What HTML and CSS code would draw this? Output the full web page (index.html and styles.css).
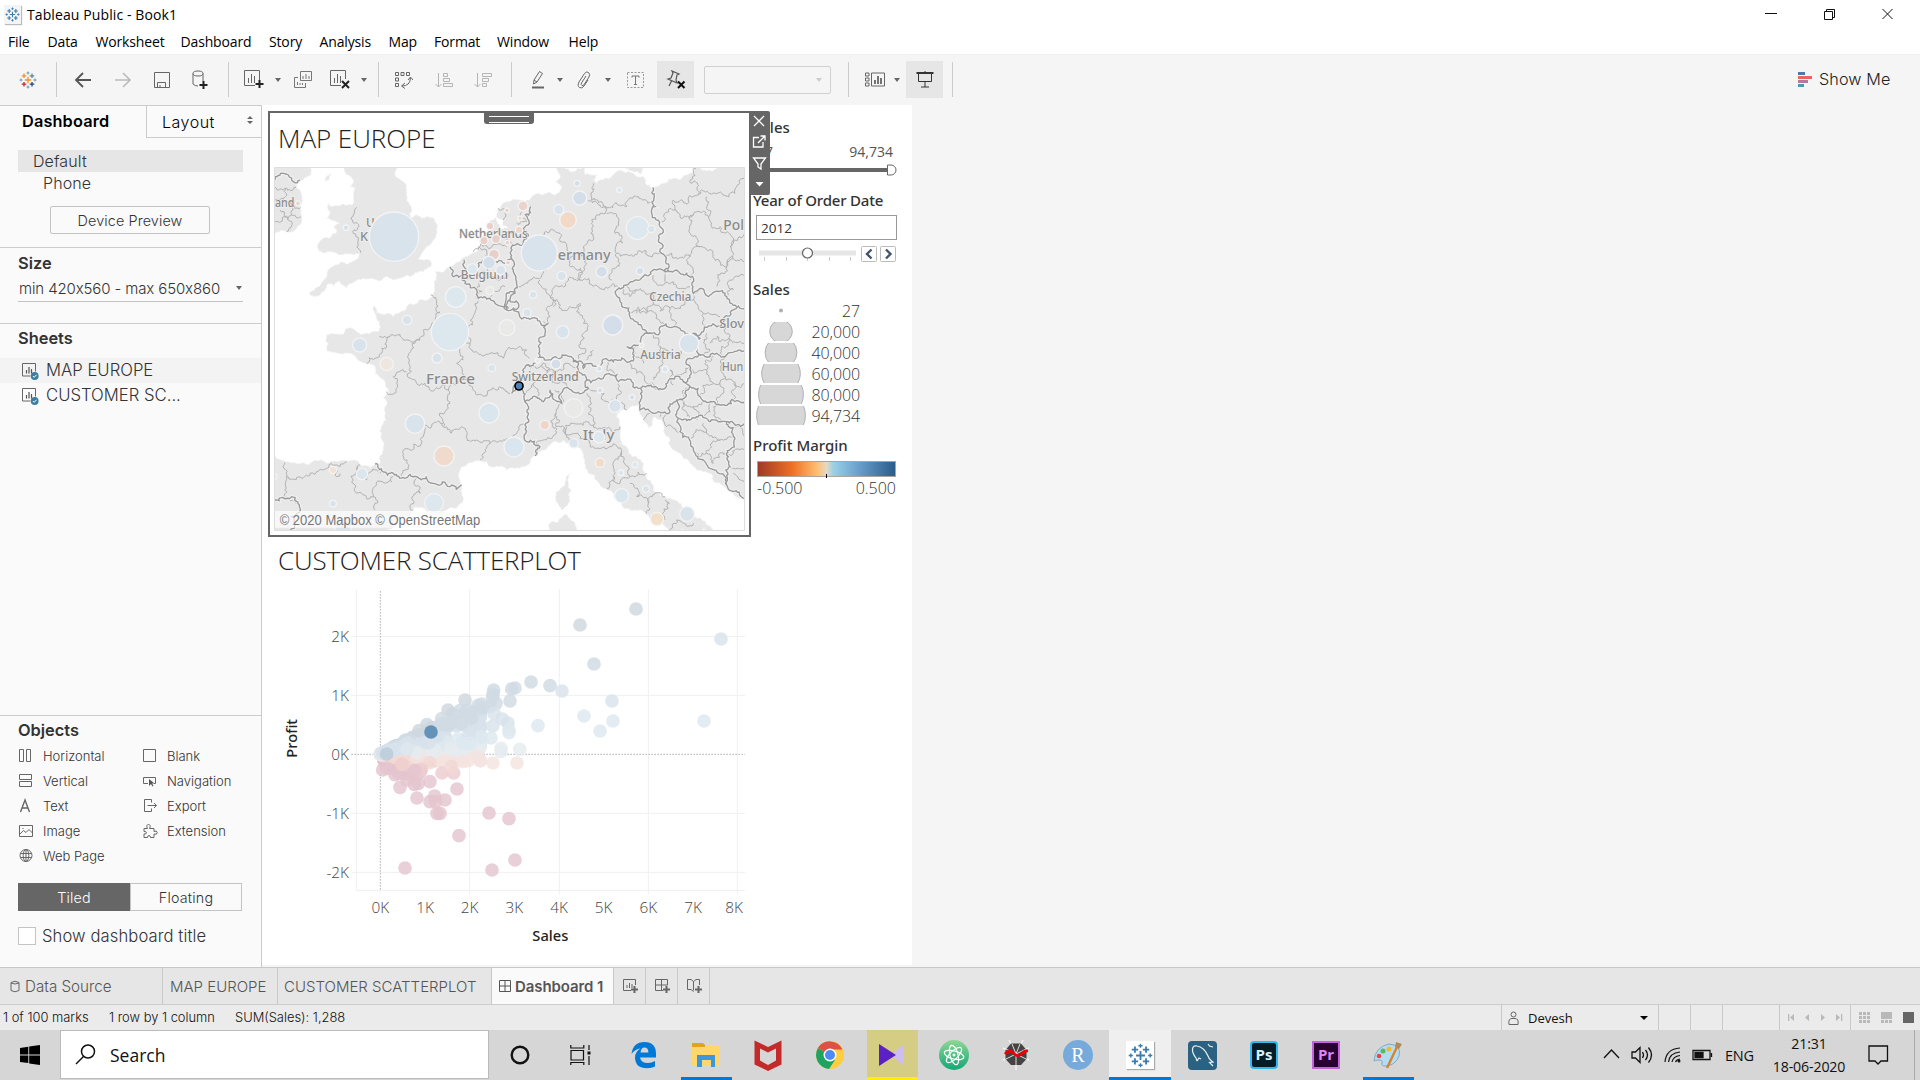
FILE: index.html
```html
<!DOCTYPE html>
<html lang="en">
<head>
<meta charset="utf-8">
<title>Tableau Public - Book1</title>
<link rel="stylesheet" href="styles.css">
</head>
<body>
<svg class="defs" width="0" height="0">
  <defs>
    <symbol id="tableau" viewBox="0 0 18 18">
      <g fill="none" stroke-width="1.3">
        <path stroke="var(--a,#3b7cab)" d="M9 5.8v6.4M5.8 9h6.4"/>
        <path stroke="var(--b,#3b7cab)" d="M5 2.5v4.6M2.7 4.8h4.6"/>
        <path stroke="var(--c,#3b7cab)" d="M13 2.5v4.6M10.7 4.8h4.6"/>
        <path stroke="var(--d,#3b7cab)" d="M5 10.9v4.6M2.7 13.2h4.6"/>
        <path stroke="var(--e,#3b7cab)" d="M13 10.9v4.6M10.7 13.2h4.6"/>
        <path stroke="var(--f,#3b7cab)" stroke-width="1" d="M9 .5v3M7.5 2h3M9 14.5v3M7.5 16h3M.5 9h3M2 7.5v3M14.500 9h3M16 7.500v3"/>
      </g>
    </symbol>
    <symbol id="sheet" viewBox="0 0 18 18">
      <path d="M14.500 9.500V1.500H1.500v12.500H9.500" fill="none" stroke="#666"/>
      <path d="M5.500 11.500V8M8 11.500V5M10.500 11.500V7" stroke="#555" stroke-width="1.200"/>
      <circle cx="13.700" cy="14" r="3.900" fill="#3b7ea1"/>
      <path d="M11.900 14l1.300 1.300 2.300-2.500" fill="none" stroke="#fff"/>
    </symbol>
  </defs>
</svg>

<header class="titlebar">
  <span class="app-icon"><svg width="15" height="15"><use href="#tableau"/></svg></span>
  <span class="title">Tableau Public - Book1</span>
  <svg class="winctl" width="116" height="16" viewBox="0 0 116 16" fill="none" stroke="#111">
    <path d="M-6 7.500h12M53.500 5.500h8v8h-8zM55.500 5.500v-2h8v8h-2M111.500 3l10 10M121.500 3l-10 10"/>
  </svg>
</header>

<nav class="menubar">
  <span>File</span><span>Data</span><span>Worksheet</span><span>Dashboard</span><span>Story</span><span>Analysis</span><span>Map</span><span>Format</span><span>Window</span><span>Help</span>
</nav>

<div class="toolbar">
  <span class="t t-logo"><svg width="18" height="18"><use href="#tableau"/></svg></span>
  <i class="sep after-logo"></i>
  <span class="t w40"><svg width="18" height="16" viewBox="0 0 18 16" fill="none" stroke="#555" stroke-width="1.800"><path d="M17 8H2M9 1L2 8l7 7"/></svg></span>
  <span class="t w39"><svg width="18" height="16" viewBox="0 0 18 16" fill="none" stroke="#bbb" stroke-width="1.600"><path d="M1 8h15M9 1l7 7-7 7"/></svg></span>
  <span class="t w39"><svg width="16" height="16" viewBox="0 0 16 16" fill="none" stroke="#666"><path d="M.5.5h15v15H.5zM3.500 15.500v-5h8v5M6 13v2"/></svg></span>
  <span class="t w38"><svg width="16" height="20" viewBox="0 0 16 20" fill="none" stroke="#666"><ellipse cx="6" cy="3.500" rx="5" ry="2.500"/><path d="M1 3.500V14q2 2 5 2M11 3.500V11"/><path d="M11.500 11v8M7.500 15h8" stroke="#222" stroke-width="2"/></svg></span>
  <i class="sep after-data"></i>
  <span class="t w29"><svg width="20" height="19" viewBox="0 0 20 19" fill="none" stroke="#666"><path d="M15.500 10V.5H.5v15H11M4.500 13V8M7.500 13V4M10.500 13V6"/><path d="M15.500 10v8M11.500 14h8" stroke="#222" stroke-width="2"/></svg></span>
  <span class="t w19"><i class="caret"></i></span>
  <span class="t w32"><svg width="18" height="17" viewBox="0 0 18 17" fill="none" stroke="#777"><path d="M6.500.5h11v9h-11zM4 6.500H.5v10h11V12M9 8V5M12 8V3M15 8V5M3.500 14v-3M6 14v-2M8.500 14v-2"/></svg></span>
  <span class="t w43"><svg width="20" height="19" viewBox="0 0 20 19" fill="none" stroke="#666"><path d="M15.500 9V.5H.5v15H11M4.500 13V8M7.500 13V4M10.500 13V6"/><path d="M12 11l7 7M19 11l-7 7" stroke="#222" stroke-width="2"/></svg></span>
  <span class="t w5"><i class="caret"></i></span>
  <i class="sep after-clear"></i>
  <span class="t w40"><svg width="18" height="18" viewBox="0 0 18 18" fill="none" stroke="#666"><path d="M.5 1.500h3v3h-3zM6 1.500h3v3H6zM11.500 1.500h3v3h-3zM.5 7h3v3h-3zM.5 12.500h3v3h-3zM7 15q8 0 8.500-8M10 12l-3.500 3 3.500 2.500M13 9l2.500-3L18 9"/></svg></span>
  <span class="t w40"><svg width="18" height="16" viewBox="0 0 18 16" fill="none" stroke="#b5b5b5"><path d="M3.500 1v14M.5 12l3 3 3-3M8.500 1.500h4v3h-4zM8.500 6.500h6v3h-6zM8.500 11.500h9v3h-9z"/></svg></span>
  <span class="t w38"><svg width="18" height="16" viewBox="0 0 18 16" fill="none" stroke="#b5b5b5"><path d="M3.500 1v14M.5 12l3 3 3-3M8.500 1.500h9v3h-9zM8.500 6.500h6v3h-6zM8.500 11.500h4v3h-4z"/></svg></span>
  <i class="sep after-sort"></i>
  <span class="t w28"><svg width="14" height="19" viewBox="0 0 14 19" fill="none" stroke="#666"><path d="M3 10L8.500 1.500l3 2L6 12l-3.500 2zM3 10l3 2"/><path d="M1 17.500h12" stroke-width="2"/></svg></span>
  <span class="t w15"><i class="caret"></i></span>
  <span class="t w34"><svg width="14" height="18" viewBox="0 0 14 18" fill="none" stroke="#666"><path d="M9 5L4.500 12q-1 2 .5 2.500t2.500-1.500L12 6q1.500-3-.5-4.500T7.500 2.500L2 11q-2 4 .5 5.500T7 15l4-6"/></svg></span>
  <span class="t w14"><i class="caret"></i></span>
  <span class="t w41"><svg width="17" height="16" viewBox="0 0 17 16" fill="none"><path d="M.5.5h16v15H.5z" stroke="#999" stroke-dasharray="2 1.500"/><path d="M5 5.500V4h7v1.500M8.500 4v8.500M7 12.500h3" stroke="#777"/></svg></span>
  <span class="t box"><svg width="20" height="20" viewBox="0 0 20 20" fill="none" stroke="#555" stroke-width="1.200"><path d="M6 1l7 3-2 1-1 5 1 3-9-4 3-1 2-5zM5.500 11L3 16"/><path d="M12 11.500l6.500 6.500M18.500 11.500L12 18" stroke="#111" stroke-width="2"/></svg></span>
  <span class="combo"><i class="caret pale"></i></span>
  <i class="sep after-combo"></i>
  <span class="t w38"><svg width="20" height="15" viewBox="0 0 20 15" fill="none" stroke="#666"><path d="M.5 1h3.500v3H.5zM.5 6h3.500v3H.5zM.5 11h3.500v3H.5zM6.500 1h13v13h-13z"/><path d="M10 12V8M13 12V4M16 12V6" stroke-width="1.800"/></svg></span>
  <span class="t w5"><i class="caret"></i></span>
  <span class="t box present"><svg width="18" height="17" viewBox="0 0 18 17" fill="none" stroke="#333"><path d="M.5 2h17" stroke-width="2"/><path d="M9 0v1M2.500 3v7.500h13V3M9 10.500V16M5 16h8"/></svg></span>
  <i class="sep after-present"></i>
  <span class="showme"><svg width="14" height="15" viewBox="0 0 14 15"><path d="M0 0h7v3H0z" fill="#4e79a7"/><path d="M0 4h14v3H0z" fill="#e8665d"/><path d="M0 8h10v3H0z" fill="#b07aa1"/><path d="M0 12h6v3H0z" fill="#4e9ab0"/></svg>Show Me</span>
</div>

<main class="work">
  <aside class="panel">
    <div class="ptabs"><b>Dashboard</b><span>Layout<svg width="6" height="8" viewBox="0 0 6 8" fill="#666"><path d="M3 0l3 3H0zM3 8l3-3H0z"/></svg></span></div>
    <div class="devices">
      <div class="dev on">Default</div>
      <div class="dev sub">Phone</div>
      <div class="preview">Device Preview</div>
    </div>
    <section class="size">
      <h2>Size</h2>
      <div class="select"><span>min 420x560 - max 650x860</span><i class="caret"></i></div>
    </section>
    <section class="sheets">
      <h2>Sheets</h2>
      <div class="row on"><svg width="18" height="18"><use href="#sheet"/></svg><span>MAP EUROPE</span></div>
      <div class="row"><svg width="18" height="18"><use href="#sheet"/></svg><span>CUSTOMER SC...</span></div>
    </section>
    <section class="objects">
      <h2>Objects</h2>
      <div class="ogrid">
        <span><svg width="16" height="16" viewBox="0 0 16 16"><path d="M1.500 1.500h4v12h-4zM8.500 1.500h4v12h-4z"/></svg>Horizontal</span>
        <span><svg width="16" height="16" viewBox="0 0 16 16"><path d="M1.500 1.500h12v12h-12z"/></svg>Blank</span>
        <span><svg width="16" height="16" viewBox="0 0 16 16"><path d="M1.500 1.500h12v5h-12zM1.500 8.500h12v5h-12z"/></svg>Vertical</span>
        <span><svg width="16" height="16" viewBox="0 0 16 16"><path d="M6 10.500H1.500v-6h12v6H12"/><path d="M7 6v7l2-2 1.500 2.500 1-.7L10 10.500h2.500z" fill="#555" stroke="none"/></svg>Navigation</span>
        <span><svg width="16" height="16" viewBox="0 0 16 16"><path d="M2.500 14L7 2l4.500 12M4 10h6" stroke-width="1.400"/></svg>Text</span>
        <span><svg width="16" height="16" viewBox="0 0 16 16"><path d="M9.500 4.500v-3h-7v12h7v-3M5.500 7.500h9M12 5l2.500 2.500L12 10"/></svg>Export</span>
        <span><svg width="16" height="16" viewBox="0 0 16 16"><path d="M1.500 2.500h13v11h-13zM2 11l3.500-3.500 2.500 2 3-3 3.500 3.500M4.500 5.500h1"/></svg>Image</span>
        <span><svg width="16" height="16" viewBox="0 0 16 16"><path d="M2 5.500h3.500C4 3 5 1.500 6.500 1.500S9 3 7.500 5.500H12v3q3-1.500 3.200 1T12 11v3.500H8.500q0-2-1.500-2t-1.500 2H2V11q2.500.3 2.500-1.200T2 8.500z"/></svg>Extension</span>
        <span><svg width="16" height="16" viewBox="0 0 16 16"><circle cx="8" cy="7.500" r="6"/><ellipse cx="8" cy="7.500" rx="2.800" ry="6"/><path d="M2.500 5.500h11M2.500 9.500h11M8 1.500v12"/></svg>Web Page</span>
      </div>
      <div class="toggle"><span class="on">Tiled</span><span>Floating</span></div>
      <div class="check"><i></i>Show dashboard title</div>
    </section>
  </aside>

  <div class="stage">
    <div class="dash">
      <div class="views">
        <section class="view selected">
          <h1>MAP EUROPE</h1>
          <svg id="map" width="471" height="364" viewBox="42 201 1413 1092"></svg>
          <i class="handle"></i>
          <svg class="tools" width="21" height="84" viewBox="0 0 21 84" fill="none" stroke="#fff" stroke-width="1.300">
            <path d="M5 5l10 10M15 5L5 15M10 26.500H4.500V36H14v-5M9 32l7-7M11.500 25H16v4.500M4.500 47h12L12 53v5l-3-2v-3z"/>
            <path d="M6.500 71h8l-4 4.500z" fill="#fff" stroke="none"/>
          </svg>
        </section>
        <section class="view scatter">
          <h1>CUSTOMER SCATTERPLOT</h1>
          <svg id="scatter" width="480" height="375" viewBox="0 120 1440 1125"></svg>
        </section>
      </div>
      <div class="legends">
        <h3>Sales</h3>
        <div class="range"><span>27</span><span>94,734</span></div>
        <svg class="rslider" width="145" height="12" viewBox="0 0 145 12"><path d="M0 6h134" stroke="#666" stroke-width="4"/><path d="M134.500 1h3.500a5 5 0 0 1 0 10h-3.500z" fill="#fff" stroke="#666"/></svg>
        <h3 class="year-h">Year of Order Date</h3>
        <div class="year">2012</div>
        <svg class="yslider" width="140" height="18" viewBox="0 0 140 18" fill="none">
          <path d="M2 8h97" stroke="#e6e6e6" stroke-width="5"/>
          <path d="M7.500 12v4M29.500 12v4M50.500 12v4M72.500 12v4M93.500 12v4" stroke="#ccc"/>
          <circle cx="50.500" cy="8" r="5" fill="#fff" stroke="#666" stroke-width="1.200"/>
          <rect x="104.500" y="1.500" width="15" height="15" rx="1" fill="#fff" stroke="#bbb"/>
          <rect x="123.500" y="1.500" width="15" height="15" rx="1" fill="#fff" stroke="#bbb"/>
          <path d="M114.500 4.500L110 9l4.500 4.500M129 4.500l4.500 4.500-4.500 4.500" stroke="#44546a" stroke-width="2.400"/>
        </svg>
        <h3 class="size-h">Sales</h3>
        <div class="sizes">
          <span><svg width="52" height="19" viewBox="-26 -9.500 52 19"><circle class="dot" r="2"/></svg>27</span>
          <span><svg width="52" height="19" viewBox="-26 -9.500 52 19"><circle r="11.300"/></svg>20,000</span>
          <span><svg width="52" height="19" viewBox="-26 -9.500 52 19"><circle r="15.900"/></svg>40,000</span>
          <span><svg width="52" height="19" viewBox="-26 -9.500 52 19"><circle r="19.300"/></svg>60,000</span>
          <span><svg width="52" height="19" viewBox="-26 -9.500 52 19"><circle r="22.400"/></svg>80,000</span>
          <span><svg width="52" height="19" viewBox="-26 -9.500 52 19"><circle r="24.400"/></svg>94,734</span>
        </div>
        <h3 class="margin-h">Profit Margin</h3>
        <div class="ramp"><i></i></div>
        <div class="ramp-labels"><span>-0.500</span><span>0.500</span></div>
      </div>
    </div>
  </div>
</main>

<div class="sheetbar">
  <span class="tab src"><svg width="10" height="13" viewBox="0 0 10 13" fill="none" stroke="#666"><path d="M1 2.500q4-2.500 8 0v8q-4 2.500-8 0zM1 3q4 2 8 0"/></svg>Data Source</span>
  <span class="tab map">MAP EUROPE</span>
  <span class="tab cust">CUSTOMER SCATTERPLOT</span>
  <span class="tab cur"><svg width="12" height="12" viewBox="0 0 12 12" fill="none" stroke="#555"><path d="M.5.500h11v11H.5zM6 .5v11M.5 6h11"/></svg>Dashboard 1</span>
  <span class="tab new"><svg width="16" height="16" viewBox="0 0 16 16" fill="none" stroke="#666"><path d="M12.500 7V1.500H.5v11H8M4 10V7M6.500 10V5M9 10V6"/><path d="M11.500 8v7M8 11.500h7" stroke-width="2"/></svg></span>
  <span class="tab new"><svg width="16" height="16" viewBox="0 0 16 16" fill="none" stroke="#666"><path d="M12.500 7V1.500H.5v11H8M6.500 1.500v11M.5 7h12"/><path d="M11.500 8v7M8 11.500h7" stroke-width="2"/></svg></span>
  <span class="tab new"><svg width="16" height="16" viewBox="0 0 16 16" fill="none" stroke="#666"><path d="M12.500 7V1.500H9L6.500 3.500 4 1.500H.5v10H4l2.500 2M6.500 3.500v9"/><path d="M11.500 8v7M8 11.500h7" stroke-width="2"/></svg></span>
</div>

<div class="status">
  <span class="s1">1 of 100 marks</span><span class="s2">1 row by 1 column</span><span class="s3">SUM(Sales): 1,288</span>
  <span class="cell user"><svg width="11" height="14" viewBox="0 0 11 14" fill="none" stroke="#666"><circle cx="5.500" cy="3.500" r="2.500"/><path d="M1 13.500q-1-6 3-6h3q4 0 3 6z"/></svg>Devesh<i class="caret black"></i></span>
  <span class="cell w32b"></span><span class="cell w32b"></span><span class="cell w57"></span>
  <span class="cell nav"><svg width="55" height="9" viewBox="0 0 55 9" fill="#b9b9b9"><path d="M0 1h1.300v7H0zM6 1v7L2 4.500zM21 1v7l-4-3.500zM33 1v7l4-3.500zM48 1v7l4-3.500zM53 1h1.300v7H53z"/></svg></span>
  <span class="cell grids"><svg width="56" height="11" viewBox="0 0 56 11" fill="#b9b9b9"><path d="M0 0h3v3H0zM4 0h3v3H4zM8 0h3v3H8zM0 4h3v3H0zM4 4h3v3H4zM8 4h3v3H8zM0 8h3v3H0zM4 8h3v3H4zM8 8h3v3H8zM22 0h11v7H22zM22 8h3v3h-3zM26 8h3v3h-3zM30 8h3v3h-3z"/><path d="M44 0h11v11H44z" fill="#666"/></svg></span>
</div>

<footer class="taskbar">
  <span class="start"><svg width="20" height="20" viewBox="0 0 20 20"><path d="M0 3l8.300-1.200v7.700H0zM9.200 1.600L20 0v9.500H9.200zM0 10.400h8.300V18L0 16.900zM9.200 10.400H20V20L9.200 18.400z"/></svg></span>
  <div class="search"><svg width="21" height="21" viewBox="0 0 21 21" fill="none" stroke="#111" stroke-width="1.500"><circle cx="13" cy="7.500" r="6.500"/><path d="M8.500 12.500L1 20"/></svg>Search</div>
  <span class="app"><svg width="20" height="20" viewBox="0 0 20 20" fill="none" stroke="#111" stroke-width="2.400"><circle cx="10" cy="10" r="8.300"/></svg></span>
  <span class="app tv"><svg width="22" height="20" viewBox="0 0 22 20" fill="none" stroke="#111" stroke-width="1.200"><path d="M1 5.500h12.500v9.500H1zM.8 0v3h13V0M.8 20v-2.500h13V20M19 0v5M19 11v9"/><path d="M17.500 6.500h3v3h-3z" fill="#111" stroke="none"/></svg></span>
  <span class="app"><svg width="26" height="28" viewBox="0 0 26 28"><path d="M.5 13Q2 1 13.500 1 25 1 25 13v3.500H9q1 5.500 8 5.500 3.500 0 7-2v5.500q-3 1.700-8 1.700-11.500 0-12-10.500 0-6 5.500-9.200-5.500.5-9 5.500zm9-1.500h8q-.3-5-4-5-3.500 0-4 5z" fill="#0078d7"/></svg></span>
  <span class="app run"><svg width="29" height="25" viewBox="0 0 29 25"><path d="M0 0h11l2 2v4H0z" fill="#e3a21a"/><path d="M0 4h13l3-2h12v21H0z" fill="#ffd76a"/><path d="M5 24V12h18v12h-4v-7h-9v7z" fill="#3e97d9"/></svg></span>
  <span class="app"><svg width="28" height="31" viewBox="0 0 28 31"><path d="M.5.500L14 7 27.500.500v24L14 31 .5 24.500z" fill="#c32a2a"/><path d="M6 8.500l8 4 8-4v12l-8 4.500-8-4.500z" fill="#d6d6d6"/></svg></span>
  <span class="app"><svg width="28" height="28" viewBox="0 0 28 28"><circle cx="14" cy="14" r="14" fill="#ffcd40"/><path d="M14 14L1.900 7A14 14 0 0 0 13 28l6-9z" fill="#1da462"/><path d="M14 14L1.900 7a14 14 0 0 1 24.600 1.500H14z" fill="#dd5144"/><circle cx="14" cy="14" r="6.500" fill="#fff"/><circle cx="14" cy="14" r="5" fill="#4c8bf5"/></svg></span>
  <span class="app alert"><svg width="28" height="24" viewBox="0 0 28 24"><path d="M26 1v22L13 12z" fill="#cdbdf0"/><path d="M1 1l17 11L1 23z" fill="#5b21c4"/></svg></span>
  <span class="app"><svg width="30" height="30" viewBox="0 0 30 30"><defs><linearGradient id="ga" x2="0" y2="1"><stop stop-color="#8fd694"/><stop offset="1" stop-color="#12a876"/></linearGradient></defs><circle cx="15" cy="15" r="15" fill="url(#ga)"/><g fill="none" stroke="#fff" stroke-width="1.200"><ellipse cx="15" cy="15" rx="10" ry="4" transform="rotate(15 15 15)"/><ellipse cx="15" cy="15" rx="10" ry="4" transform="rotate(75 15 15)"/><ellipse cx="15" cy="15" rx="10" ry="4" transform="rotate(135 15 15)"/></g><circle cx="15" cy="15" r="1.500" fill="#fff"/></svg></span>
  <span class="app"><svg width="28" height="30" viewBox="0 0 28 30"><g stroke="#f2f2f2" stroke-width="1.500"><path d="M14 14V30M14 14L27 8M14 14L1 8M14 14l13 6M14 14L1 20M14 14l7-14M14 14L7 0"/></g><path d="M9 3.500h10l5.500 6.500v9L19 25H9l-5.500-6v-9z" fill="#444"/><path d="M14 14L10 4M14 14l4-10M14 14v11M14 14l10 5M14 14l-10 5M14 14L4 9M14 14l10-5" stroke="#ddd"/><path d="M3 14q4-5 8-1.500 4 5 8 2 3-4 7-3.500" fill="none" stroke="#e00" stroke-width="2.800"/></svg></span>
  <span class="app"><span class="rlogo">R</span></span>
  <span class="app active"><span class="tlogo"><svg width="25" height="25"><use href="#tableau"/></svg></span></span>
  <span class="app"><svg width="29" height="29" viewBox="0 0 29 29"><rect width="29" height="29" rx="4" fill="#2b6282"/><path d="M9 20l-1-3q-4-5-3.500-9Q5 4 9 5q7 1 11 10 1 3 3 4.500l2 1.500-3.500.5L25 25M9 20l2-3 2 1M20 3l1.500 2L25 6" fill="none" stroke="#e8f0f5" stroke-width="1.200"/></svg></span>
  <span class="app"><span class="adobe ps">Ps</span></span>
  <span class="app"><span class="adobe pr">Pr</span></span>
  <span class="app run"><svg width="30" height="28" viewBox="0 0 30 28"><path d="M1 20Q2 6 16 3q13 1 10 12-4 10-14 10-4 0-3-3t-3-3-5 1z" fill="#b5dcf0" stroke="#7eaac4"/><circle cx="6" cy="15" r="2.300" fill="#e44"/><circle cx="10" cy="10" r="2.500" fill="#5cb85c"/><circle cx="16" cy="8" r="2.500" fill="#f5b82e"/><path d="M14 27L24 6" stroke="#d9822b" stroke-width="2.400"/><path d="M22 6l1-5 6 2-3 5z" fill="#b08a5a"/></svg></span>
  <svg class="tray" width="110" height="22" viewBox="0 0 110 22" fill="none" stroke="#111" stroke-width="1.300">
    <path d="M1 14l7.500-8L16 14M29 8h3.500L37 3.500v15L32.500 14H29zM39.500 8q2 3 0 6M42.500 6q4 5 0 10M45.500 3.500q6 7.500 0 15"/>
    <path d="M62 18q1-13 15-14M65.500 18q1-9 11.500-10M69 18q1-5.500 8-6.500M72.500 18q1-2.500 4.500-3" stroke-width="1.200"/><circle cx="76" cy="17" r="1.500" fill="#111" stroke="none"/>
    <path d="M90 6.500h17v9H90zM108.500 9v4"/><path d="M92 8.500h8v5h-8z" fill="#111"/>
  </svg>
  <span class="eng">ENG</span>
  <span class="clock"><span>21:31</span><span>18-06-2020</span></span>
  <svg class="note" width="21" height="21" viewBox="0 0 21 21" fill="none" stroke="#111" stroke-width="1.300"><path d="M1 1h18.500v15H13l-3 3-3-3H1z"/></svg>
  <i class="peek"></i>
</footer>
<script src="charts.js"></script>
</body>
</html>
```
FILE: styles.css
```css
* { box-sizing: border-box; }
body { margin: 0; width: 1920px; height: 1080px; overflow: hidden; background: #fff; color: #333; font-family: Inter, "Open Sans", sans-serif; font-weight: 300; display: flex; flex-direction: column; }
h1, h2, h3 { margin: 0; font-weight: 300; }
svg { display: block; flex: none; }
.defs { position: absolute; }
span { white-space: nowrap; }

.titlebar { height: 28px; display: flex; align-items: center; padding: 0 26px 0 4px; color: #000; font: 400 14px "Open Sans", sans-serif; }
.app-icon { width: 17px; height: 19px; display: flex; align-items: center; justify-content: center; background: #f4f4f4; box-shadow: 1px 1px 1px #bbb; }
.title { flex: 1; padding-left: 6px; letter-spacing: .1px; }
.winctl { overflow: visible; margin-right: 7px; }
.menubar { height: 26px; padding: 1px 0 0 8px; display: grid; grid-template-columns: 39.500px 48px 85px 88.500px 50.500px 69px 45.500px 63px 71.500px 60px; align-items: center; color: #000; font: 400 14px "Open Sans", sans-serif; letter-spacing: -.15px; }

.toolbar { height: 51px; background: #f5f5f5; border-top: 1px solid #efefef; display: flex; align-items: center; padding-bottom: 1px; }
.t { display: flex; align-items: center; justify-content: center; height: 37px; }
.t-logo { width: 56px; --a: #eb912c; --b: #eb912c; --c: #5b879b; --d: #c72035; --e: #1f457e; --f: #7099a6; }
.w5 { width: 5px; } .w14 { width: 14px; } .w15 { width: 15px; } .w19 { width: 19px; } .w28 { width: 28px; } .w29 { width: 29px; } .w32 { width: 32px; } .w34 { width: 34px; } .w38 { width: 38px; } .w39 { width: 39px; } .w40 { width: 40px; } .w41 { width: 41px; } .w43 { width: 42px; }
.sep { width: 1px; height: 35px; background: #ccc; }
.after-logo { margin-right: 6px; }
.after-data { margin: 0 10px 0 9px; }
.after-clear { margin: 0 5px 0 12px; }
.after-sort { margin: 0 12px 0 9px; }
.after-combo { margin: 0 7px 0 17px; }
.after-present { margin-left: 9px; }
.box { width: 37px; background: #e6e6e6; margin-left: 1px; }
.present { margin-left: 7px; }
.combo { width: 127px; height: 28px; margin-left: 10px; border: 1px solid #d0d0d0; border-radius: 2px; display: flex; align-items: center; justify-content: flex-end; padding-right: 8px; }
.caret { width: 0; border: 3px solid transparent; border-top: 4px solid #666; border-bottom: 0; }
.caret.pale { border-top-color: #ccc; }
.showme { margin-left: auto; width: 122px; display: flex; align-items: center; gap: 7px; font-size: 16.200px; color: #222; letter-spacing: .1px; padding-bottom: 1px; }

.work { height: 862px; display: flex; background: #f5f5f5; }
.panel { width: 262px; border-right: 1px solid #ccc; border-top: 1px solid #ccc; background: #fafafa; display: flex; flex-direction: column; }
.ptabs { height: 32px; display: flex; color: #000; font-size: 16px; }
.ptabs b { width: 146px; padding: 5px 0 0 22px; font-weight: 600; font-size: 16.300px; letter-spacing: .15px; }
.ptabs span { flex: 1; display: flex; align-items: center; justify-content: space-between; border-left: 1px solid #ccc; border-bottom: 1px solid #ccc; padding: 0 8px 0 15px; letter-spacing: .5px; }
.ptabs svg { margin-bottom: 3px; }
.devices { height: 109px; padding: 12px 18px 0; font-size: 16px; }
.dev { height: 22px; line-height: 22px; padding-left: 15px; letter-spacing: .1px; }
.dev.sub { padding-left: 25px; }
.dev.on { background: #e6e6e6; }
.preview { margin: 12px 0 0 32px; width: 160px; height: 28px; border: 1px solid #c4c4c4; border-radius: 2px; text-align: center; line-height: 27px; font-size: 14.400px; letter-spacing: .1px; }
.panel section { border-top: 1px solid #ccc; }
h2 { font-size: 16.400px; font-weight: 600; line-height: 20px; }
.size { height: 76px; padding: 5px 18px 0; }
.select { height: 29px; border-bottom: 1px solid #c4c4c4; display: flex; align-items: center; justify-content: space-between; font-size: 15px; padding: 2px 1px 0; letter-spacing: -.12px; }
.sheets { flex: 1; padding-top: 4px; }
.sheets h2 { padding-left: 18px; margin-bottom: 10px; }
.row { height: 25px; display: flex; align-items: center; gap: 7px; padding-left: 21px; font-size: 16.700px; }
.row span { padding-bottom: 2px; }
.row.on { background: #f3f3f3; }
.objects { height: 252px; padding: 4px 18px 0; }
.ogrid { display: grid; grid-template-columns: 124px 1fr; grid-auto-rows: 25px; align-items: center; font-size: 13px; padding-top: 3px; }
.ogrid span { display: flex; align-items: center; gap: 9px; }
.ogrid svg { fill: none; stroke: #666; }
.toggle { width: 224px; height: 28px; margin-top: 15px; display: flex; font-size: 14.300px; line-height: 27px; text-align: center; letter-spacing: .2px; }
.toggle span { flex: 1; border: 1px solid #c4c4c4; }
.toggle .on { background: #666; border-color: #666; color: #fff; }
.check { display: flex; align-items: center; gap: 6px; margin-top: 15px; font-size: 16.600px; letter-spacing: .1px; }
.check i { width: 18px; height: 18px; border: 1px solid #c4c4c4; background: #fff; }

.stage { flex: 1; }
.dash { width: 650px; height: 860px; background: #fff; display: flex; padding: 6px 0 0 6px; font-family: "Open Sans", sans-serif; }
.views { width: 483px; }
.view { position: relative; }
.view h1 { font-size: 26px; font-weight: 300; line-height: 50px; height: 54px; padding-left: 9px; letter-spacing: -.05px; color: #222; }
.selected { height: 426px; border: 2px solid #666; padding-left: 4px; }
.view.selected h1 { padding-left: 4px; }
.handle { position: absolute; left: 214px; top: -1px; width: 50px; height: 12px; background: #666; border-radius: 0 0 3px 3px; padding: 4px 5px; }
.handle::before { content: ""; display: block; height: 5px; border: solid #fff; border-width: 1px 0; }
.tools { position: absolute; left: 479px; top: -2px; z-index: 1; background: #666; border-radius: 0 2px 2px 0; }
.view.scatter h1 { line-height: 46px; height: 43px; padding-left: 10px; letter-spacing: -.2px; }
.scatter svg { margin-left: 2px; }
#map text { font-family: "Noto Sans", sans-serif; font-weight: 500; fill: #8a8a8a; paint-order: stroke; stroke: #f0f0f0; stroke-width: 4px; }
#map .copy { font-family: "Liberation Sans", sans-serif; font-weight: 400; fill: #777; stroke: none; }
#scatter text { font-family: "Open Sans", sans-serif; font-weight: 300; font-size: 46px; fill: #444; }
#scatter .axis { font-family: "Noto Sans", "Open Sans", sans-serif; font-weight: 500; font-size: 44px; fill: #222; }

.legends { width: 145px; padding-left: 2px; font-size: 15px; font-weight: 400; }
h3 { font-family: "Noto Sans", "Open Sans", sans-serif; font-size: 15px; font-weight: 500; line-height: 20px; }
.legends h3 { padding-top: 6px; height: 26px; }
.range { height: 28px; display: flex; justify-content: space-between; align-items: center; font-size: 14px; padding: 0 3px 0 4px; color: #555; }
.rslider { margin-top: -1px; }
.legends .year-h { padding-top: 14px; height: 39px; letter-spacing: -.2px; }
.year { width: 141px; height: 25px; margin-left: 3px; border: 1px solid #999; line-height: 24px; padding-left: 4px; font-size: 13.500px; }
.yslider { margin: 5px 0 0 4px; }
.legends .size-h { padding-top: 16px; height: 37px; }
.sizes { padding-bottom: 1px; }
.sizes span { height: 21px; display: flex; align-items: center; justify-content: space-between; width: 107px; font-size: 16px; color: #333; font-weight: 300; letter-spacing: -.1px; }
.sizes svg { margin-left: 2px; overflow: hidden; }
.sizes circle { fill: #d7d7d7; stroke: #b0b0b0; }
.sizes .dot { fill: #b0b0b0; stroke: none; }
.legends .margin-h { padding-top: 8px; height: 34px; }
.ramp { width: 139px; height: 16px; margin-left: 4px; border: 1px solid #aaa69f; background: linear-gradient(90deg, #9e3a26, #ee7024 25%, #ffbe71 43%, #e5d9c3 50%, #9ad0e6 55%, #6ea3ce 72%, #2b5c8a); }
.ramp i { display: block; width: 1px; height: 4px; margin: 12px auto 0; background: #000; }
.ramp-labels { display: flex; justify-content: space-between; width: 139px; margin-left: 4px; line-height: 23px; font-size: 16px; font-weight: 300; }

.sheetbar { height: 37px; border-top: 1px solid #c8c8c8; background: #e6e6e6; display: flex; font-size: 15px; color: #555; }
.tab { display: flex; align-items: center; border-right: 1px solid #c8c8c8; padding-left: 7px; }
.src { width: 163px; padding-left: 10px; gap: 5px; font-size: 15.200px; }
.map { width: 115px; }
.cust { width: 214px; padding-left: 6px; }
.cur { width: 122px; background: #fafafa; gap: 4px; font-weight: 600; letter-spacing: -.1px; }
.new { width: 32px; padding-left: 9px; }
.status { height: 26px; border-top: 1px solid #ccc; background: #ebebeb; display: flex; align-items: center; font-size: 12.900px; color: #111; }
.s1 { width: 109px; padding-left: 3px; } .s2 { width: 126px; } .s3 { flex: 1; }
.cell { height: 25px; border-left: 1px solid #c8c8c8; display: flex; align-items: center; }
.user { width: 157px; gap: 9px; padding: 0 10px 0 6px; font: 400 13px "Open Sans", sans-serif; }
.black { border-top-color: #000; border-width: 4px; border-bottom: 0; margin-left: auto; }
.w32b { width: 32px; } .w57 { width: 57px; } .nav { width: 71px; padding-left: 8px; } .grids { width: 70px; padding-left: 8px; }

.taskbar { height: 50px; background: #d6d6d6; display: flex; align-items: center; color: #111; font-family: "Open Sans", sans-serif; font-weight: 400; }
.start { width: 60px; padding-left: 20px; }
.search { width: 429px; height: 49px; align-self: flex-start; background: #fff; border: 1px solid #bbb; display: flex; align-items: center; padding-left: 14px; gap: 14px; font-size: 17.500px; }
.app { width: 62px; height: 50px; display: flex; align-items: center; justify-content: center; position: relative; }
.tv { padding-right: 3px; }
.run::after, .alert::after, .active::after { content: ""; position: absolute; left: 6px; right: 5px; bottom: 0; height: 3px; background: #0078d7; }
.alert::before { content: ""; position: absolute; inset: 0 5px 0 6px; background: #d5cd84; }
.alert::after { background: #ffee00; }
.alert svg { position: relative; }
.active { background: #efefef; }
.active::after { left: 0; right: 0; }
.rlogo { width: 30px; height: 30px; border-radius: 50%; background: #75aadb; color: #fff; text-align: center; font: 20px/30px "Liberation Serif", serif; }
.tlogo { width: 28px; height: 28px; background: #fff; display: flex; align-items: center; justify-content: center; box-shadow: 1px 1px 1px #aaa; }
.adobe { width: 28px; height: 28px; text-align: center; font: 700 15px/23px "Open Sans", sans-serif; border: 2px solid; }
.ps { background: #051d26; color: #d8f2fb; border-color: #2fb9ee; border-radius: 4px; }
.pr { background: #2a0033; color: #df86f5; border-color: #c661e0; }
.tray { margin-left: 184px; }
.eng { width: 58px; padding-left: 12px; font-size: 14.500px; letter-spacing: -.2px; }
.clock { width: 76px; display: flex; flex-direction: column; align-items: center; font-size: 14.200px; line-height: 23px; letter-spacing: -.15px; }
.note { margin-left: 21px; }
.peek { width: 1px; height: 50px; background: #aaa; margin-left: auto; margin-right: 5px; }
```
FILE: charts.js
```js
// Seeded generator, so that both charts come out the same on each load.
let seed = 7;
const rnd = () => (seed = (seed * 16807) % 2147483647) / 2147483647;
const parse = s => s.trim().split(/\s+/).map(p => p.split(',').map(Number));

// Breaks a polyline into short, irregular steps, as a coast or a border has.
function rough(pts, amp, min) {
  const out = [pts[0]];
  const cut = (a, b) => {
    const dx = b[0] - a[0], dy = b[1] - a[1], l = Math.hypot(dx, dy);
    if (l < min || l > 300) { out.push(b); return; }
    const k = (rnd() - .5) * amp, m = [(a[0] + b[0]) / 2 - dy * k, (a[1] + b[1]) / 2 + dx * k];
    cut(a, m); cut(m, b);
  };
  for (let i = 1; i < pts.length; i++) cut(pts[i - 1], pts[i]);
  return 'M' + out.map(p => p[0].toFixed(1) + ' ' + p[1].toFixed(1)).join('L');
}

const land = [
  // Ireland, Isle of Man, Great Britain
  '38,198 155,200 153,225 130,240 108,250 122,275 125,310 122,340 125,365 110,385 80,395 20,408 20,198',
  '212,220 208,238 195,245 200,228 212,220',
  '255,198 262,225 278,238 272,260 285,265 282,290 276,315 250,312 235,318 205,310 210,335 200,355 225,362 240,370 222,378 228,400 205,415 175,430 172,442 188,458 215,455 240,465 275,462 300,458 285,480 265,492 225,495 205,510 195,535 165,565 148,580 170,588 190,575 200,555 240,545 260,565 285,545 310,535 350,540 380,530 420,535 460,525 490,515 512,500 510,482 475,478 485,460 500,440 520,420 530,390 525,365 505,350 465,345 450,355 456,330 440,300 440,270 430,245 405,225 408,198 255,198',
  // Continent
  '890,198 900,225 888,245 905,265 885,285 860,280 835,280 810,300 780,300 750,305 725,315 710,345 695,360 690,390 680,410 655,440 630,465 600,485 570,500 525,515 522,545 520,580 490,600 440,620 400,650 385,640 350,640 342,618 345,640 358,665 356,695 330,700 310,702 290,695 265,685 250,702 200,705 198,725 205,730 200,750 235,760 265,760 290,775 315,790 340,795 345,820 375,845 385,870 370,892 382,910 378,960 370,1050 360,1090 300,1093 240,1082 200,1090 130,1088 80,1085 20,1068 20,1400 370,1400 370,1298 420,1255 500,1235 560,1230 610,1200 605,1160 600,1140 598,1115 620,1095 660,1080 690,1100 740,1110 790,1100 825,1065 850,1050 880,1025 910,1020 940,1030 965,1050 975,1080 985,1120 1010,1140 1035,1165 1060,1190 1085,1215 1110,1230 1150,1235 1175,1260 1215,1280 1225,1298 1375,1298 1340,1275 1300,1250 1275,1230 1245,1200 1215,1190 1180,1170 1165,1140 1150,1090 1130,1070 1105,1060 1085,1030 1080,980 1070,950 1100,930 1140,920 1150,960 1165,985 1185,950 1205,960 1225,1010 1240,1050 1270,1075 1300,1100 1350,1120 1380,1150 1420,1180 1480,1210 1480,198 1310,198 1290,220 1240,235 1195,258 1180,270 1160,255 1150,230 1120,220 1090,215 1070,215 1050,235 1010,250 1000,240 1010,225 975,225 975,198 890,198',
  '925,1125 930,1120 933,1170 925,1210 905,1230 888,1205 888,1175 915,1155 925,1125',
  '915,1242 945,1270 948,1298 870,1298 865,1275 895,1265 915,1242',
  '1095,205 1125,198 1150,198 1142,222 1120,215'
];
const lakes = ['710,350 735,358 728,375 745,385 722,388 712,370 710,350'];

const borders = [
  '45,240 70,220 85,225 100,245 120,240',
  '812,320 808,370 790,385 800,400 790,430 755,440 755,475 760,510 770,545 765,580 750,600 745,625',
  '612,480 615,505 655,490 690,480 735,490 755,475', '570,500 580,530 610,525 615,550 650,570 655,595 690,595 705,610 740,630 760,625 800,655 865,670 855,700 835,740 830,780',
  '740,630 738,600 755,575 765,580', '745,600 775,610 770,628 760,625',
  '1178,262 1185,320 1175,340 1200,380 1195,420 1205,460 1218,480 1215,515 1190,510 1140,540 1100,555 1070,570 1085,610 1110,650 1145,680 1175,700 1200,698 1218,672 1260,685 1300,700 1330,695 1370,680 1390,655 1420,630 1454,625',
  '1215,515 1250,510 1280,520 1300,580 1320,565 1345,590 1365,575 1400,590 1430,620',
  '830,780 800,795 790,830 770,845 755,880 770,860 790,875 795,905 850,905 870,870 905,910 925,865 965,880 980,840 955,810 940,785 885,770 830,780',
  '795,905 805,940 795,975 800,1025 840,1040 825,1067',
  '940,780 965,785 970,805 1010,800 1060,785 1110,785 1100,740 1145,730 1150,705 1175,700',
  '980,840 1030,835 1070,825 1075,845 1140,865 1205,868 1270,845 1290,810 1290,775 1320,765 1320,715 1300,700',
  '1320,765 1350,770 1390,770 1454,755', '1140,865 1145,895 1140,930 1185,940 1230,935 1250,900 1290,860 1270,845',
  '1290,860 1320,890 1380,915 1454,910', '1255,955 1290,960 1350,965 1400,965 1454,970', '1250,900 1255,955 1260,995 1300,1050 1350,1105 1400,1155 1454,1195',
  '345,1092 400,1120 470,1130 520,1150 570,1160 605,1155', '43,1200 95,1190 118,1220 95,1250 90,1291',
  '1400,965 1420,1010 1400,1060 1410,1100 1400,1155'
];
const regions = [
  '45,300 70,295 90,305 105,325 122,322', '45,262 75,265 108,262', '60,330 75,350 95,365 80,395', '45,365 70,350 95,345 122,350', '70,295 75,265', '95,345 90,305',
  '290,322 280,345 292,370 280,400 295,420 290,440 302,458',
  '1000,250 995,300 1040,330 1010,345 1000,380 1000,420 970,440 960,540 900,560 880,620', '985,300 1040,325 1100,320 1150,300 1180,310', '1040,340 1070,350 1065,400 1070,460 1120,470 1200,460', '870,390 900,400 920,440 930,490 960,540', '870,390 840,410 810,440', '960,540 1000,560 1060,550 1075,560', '1070,460 1080,490 1055,540',
  '770,560 810,540 850,520 870,490', '840,540 860,580 880,600 870,650 865,670', '880,600 930,620 960,610 970,700 978,750 965,785',
  '1308,202 1315,285 1240,300 1245,330 1205,365', '1315,285 1370,280 1430,260 1454,235', '1340,290 1345,350 1380,380', '1300,345 1290,400 1320,440 1290,470 1235,460 1218,480', '1380,380 1410,440 1400,500 1370,560', '1320,440 1360,455 1400,500', '1290,470 1300,520 1290,540', '1400,500 1454,490', '1454,400 1420,420 1410,440', '1245,330 1300,345 1345,350', '1400,590 1410,540 1454,530',
  '1085,560 1110,590 1130,570 1100,555', '1180,525 1190,550 1240,545 1290,560', '1130,570 1170,580 1180,610 1130,640', '1180,610 1230,625 1300,600 1320,570', '1230,625 1240,680', '1300,600 1330,640 1330,690', '1215,515 1215,545', '1110,640 1160,640 1200,665 1218,672', '1330,640 1380,650',
  '715,325 735,340 730,360', '790,330 780,345 800,365 770,370', '755,440 740,420 745,395 775,400', '640,455 690,445 740,440', '690,480 680,450 655,440', '655,520 700,530 745,525', '690,595 700,565 735,560', '655,550 650,595', '620,505 640,520 655,500',
  '512,585 530,610 525,660 490,690 480,720 450,800 495,850 565,870 570,910 550,980', '600,745 630,730 620,690 640,650 655,600', '358,710 400,705 430,720 480,720', '385,710 380,740 345,775 320,790', '440,815 400,830 408,872 380,875', '600,745 590,790 600,840 565,870', '630,730 690,760 730,775 760,745 800,750 808,775', '600,840 640,870 650,885 690,870 720,860 750,880', '550,980 520,970 490,1010 430,1050 435,1110 425,1130', '550,980 600,985 650,1020 690,1030 730,1020 770,1000 780,975 800,970', '690,1030 670,1060 660,1080', '865,670 850,665',
  '885,870 900,910 890,950 915,990 940,1020', '890,940 890,985 850,1020 830,1035', '915,1000 940,970 1000,975 1080,980', '980,880 985,920 1000,960 1000,975', '985,860 1030,900 1070,900 1075,845', '1070,900 1100,930', '915,985 925,1005 990,1040 1050,1040 1085,1055', '1085,1055 1060,1100 1040,1165', '1085,1055 1105,1100 1110,1130 1080,1150 1060,1130', '1110,1130 1160,1120', '1110,1150 1130,1190 1165,1210 1215,1190', '1165,1210 1160,1240', '1215,1260 1225,1225 1215,1200', '1230,1290 1250,1260 1300,1270',
  '75,1088 80,1130 150,1120 200,1105 240,1100 260,1085', '80,1130 75,1190 110,1210', '300,1095 275,1145 290,1180 340,1190 400,1130', '290,1100 320,1140 360,1120', '340,1190 345,1230', '470,1135 480,1180 460,1230', '220,1105 230,1130 240,1120',
  '1000,750 980,780', '1060,785 1040,810 1070,825', '1110,785 1130,820 1160,850 1205,868', '1175,700 1200,740 1210,790 1180,840', '1200,740 1270,750 1285,700', '1130,735 1150,790', '1240,855 1230,810 1290,790',
  '800,795 850,790 860,830 820,850 800,880', '850,790 880,810 890,850 925,865', '880,810 920,790 950,800', '820,850 830,890',
  '1340,700 1350,750 1320,765', '1350,730 1400,720 1454,730', '1400,680 1410,720 1390,770', '1290,810 1340,810 1360,850 1320,890', '1360,850 1400,840 1454,850', '1400,770 1400,840', '1360,770 1340,810', '1420,850 1410,910', '1380,850 1370,910',
  '1260,900 1300,920 1350,910 1330,950', '1290,860 1270,900 1290,950', '1230,935 1220,980 1260,995', '1300,920 1310,960', '1370,915 1390,965',
  '1280,1010 1340,1000 1330,970', '1340,1000 1380,1020 1340,1060', '1380,1020 1420,1010', '1300,1050 1340,1060 1360,1090', '1400,1060 1454,1050', '1410,1100 1454,1110', '1360,1090 1400,1060', '1420,980 1454,1010', '1420,1120 1454,1150',
  '1150,960 1170,940', '1200,950 1210,935'
];

const B = '#d8e3ec', L = '#dce7ee', V = '#d4deea', P = '#e9cfc9', O = '#f2d9c7', W = '#e9e9e7';
const marks = [
  [402,410,72,B],[838,459,52,B],[924,360,23,O],[959,294,19,V],[951,250,7,V],[1078,270,6,L],[896,329,13,B],[1133,384,32,L],[1174,387,9,B],[789,318,13,'#ecd3cb'],[741,331,5,P],[780,355,5,O],[777,390,9,'#efd6ca'],[690,378,9,P],[672,422,10,P],[708,417,11,P],[742,428,5,P],[702,464,14,P],[744,488,5,P],[687,488,17,V],[637,507,14,L],[722,510,13,B],[905,528,12,B],[1025,515,15,V],[1140,513,9,V],[819,584,9,B],[690,572,10,W],[801,638,10,B],[587,591,29,L],[258,383,6,V],[114,310,5,P],
  [570,696,54,L],[441,660,12,B],[299,735,19,B],[380,792,18,'#efe6df'],[531,774,13,B],[741,683,22,W],[908,696,17,B],[1058,675,28,V],[1287,731,27,B],[888,792,13,V],[695,804,9,B],[1215,808,7,B],[1018,806,6,V],[1020,871,6,V],[1116,892,6,V],[1065,918,17,B],[941,924,26,W],[687,939,28,'#d9e6ed'],[465,971,27,B],[854,975,12,'#f0d5c7'],[552,1068,28,'#f0dacb'],[762,1041,28,'#d9e6ed'],[1017,1012,15,L],[941,1030,12,B],[1020,1088,12,'#f2dcc7'],[1125,1094,7,L],[1083,1118,6,B],[1158,1167,8,B],[1085,1187,19,'#d9e6ed'],[1191,1257,18,'#f3e0ca'],[1281,1242,20,B],[219,1110,9,'#f3e2d3'],[306,1122,15,'#d9e6ed'],[219,1211,8,B],[522,1209,26,L],[250,1278,24,B],[833,782,5,W],[1145,736,5,W],[43,1130,6,L]
];
const names = [
  [45,322,58,36,'and'],[318,380,26,38,'U'],[300,424,24,38,'K'],[597,414,206,38,'Netherlands'],[602,536,142,37,'Belgium'],[862,480,190,43,'Germany'],[1390,389,62,42,'Pol'],[1168,602,126,36,'Czechia'],
  [498,852,147,45,'France'],[755,843,201,36,'Switzerland'],[1141,776,121,36,'Austria'],[1378,683,74,36,'Slov'],[1385,813,65,36,'Hun'],[968,1020,95,45,'Italy']
];

let m = '<defs><clipPath id="mc"><path d="M43 202h1411v1090H43z"/></clipPath></defs><g clip-path="url(#mc)">';
for (const s of land) m += `<path d="${rough(parse(s), .45, 9)}" fill="#e7e7e7" stroke="#f3f3f3" stroke-width="2"/>`;
for (const s of lakes) m += `<path d="${rough(parse(s), .4, 9)}" fill="#fff"/>`;
for (const s of regions) m += `<path d="${rough(parse(s), .75, 8)}" fill="none" stroke="#adadad" stroke-width="2.8"/>`;
const lines = borders.map(s => rough(parse(s), .65, 8));
for (const d of lines) m += `<path d="${d}" fill="none" stroke="#f4f4f4" stroke-width="11" opacity=".7"/>`;
for (const d of lines) m += `<path d="${d}" fill="none" stroke="#999" stroke-width="4"/>`;
for (const [x, y, w, f, t] of names) m += `<text x="${x}" y="${y}" font-size="${f}" textLength="${w}" lengthAdjust="spacingAndGlyphs">${t}</text>`;
for (const [x, y, r, c] of marks) m += `<circle cx="${x}" cy="${y}" r="${r + 2}" fill="${c}" stroke="#f3f3f3" stroke-width="4"/>`;
m += '<circle cx="777" cy="858" r="12" fill="#4e81b5" stroke="#000" stroke-width="5"/>';
m += '<path d="M43 1233h620v50H43z" fill="#fff" opacity=".65"/><text class="copy" x="59" y="1275" font-size="42" textLength="602" lengthAdjust="spacingAndGlyphs">© 2020 Mapbox © OpenStreetMap</text></g>';
m += '<path d="M43.500 202.500h1410v1089h-1410z" fill="none" stroke="#dedede" stroke-width="3"/>';
document.getElementById('map').innerHTML = m;

// Scatter plot
const tone = (x, y) => {
  const k = (643 - y) / Math.max(20, x - 318);
  if (k > .55) return '#ced7de';
  if (k > .36) return '#d0dae3';
  if (k > .2) return '#d8e2eb';
  if (k > .1) return '#dde8ef';
  if (k > .02) return '#e5ecef';
  if (k > -.1) return '#f4e3df';
  if (k > -.22) return '#f2d8d4';
  if (k > -.42) return '#edccd0';
  return '#e4c4ce';
};
seed = 4242;
const dots = [];
for (let i = 0; i < 60; i++) { const d = 10 + rnd() * 110; dots.push([331 + d, 655 + rnd() * Math.min(48, d * .9)]); }
for (let i = 0; i < 620; i++) {
  const d = Math.min(300, -Math.log(1 - rnd()) * 85), x = 331 + d;
  const k = rnd() < .8 ? rnd() * .5 + rnd() * .1 - .02 : -rnd() * .25;
  dots.push([x, Math.min(643 - d * k, d > 130 ? 662 : 690)]);
}
for (let i = 0; i < 24; i++) dots.push([331 + i * 2, 641 - i * .6]);
dots.push(...parse('585,480 534,510 471,554 447,572 515,536 570,512 592,510 635,492 640,504 660,500 678,490 671,450 669,462 668,472 725,447 735,444 720,483 672,520 697,537 714,549 717,570 717,578 668,558 663,594 633,592 625,550 600,520 605,535 545,545 575,550 597,582 693,625 693,635 749,628 625,635 622,650 600,610 580,610 338,690 352,685 375,704 390,742 411,720 433,733 445,730 480,725 441,774 480,785 494,768 497,785 525,780 501,820 510,820 516,699 551,699 545,680 580,665 479,668 454,690 434,692 561,747 669,669 741,669 657,819 717,836 567,887 735,960 666,990 405,984'));
dots.push(...parse('783,426 840,437 876,453 930,255 1098,207 1353,297 972,372 1026,483 942,528 1029,543 990,573 1302,543 804,557'));
let s = '<g stroke="#f0f0f0" stroke-width="3" fill="none"><path d="M259 147V1051H1425M599 147V1063M868 147V1063M1135 147V1063M1402 147V1063M244 289H1425M244 466H1425M244 820H1425M244 997H1425M331 1051v12"/></g>';
s += '<path d="M331 153V1051M244 643H1425" stroke="#b5b5b5" stroke-width="3" stroke-dasharray="5 4" fill="none"/>';
for (const [x, y] of dots) s += `<circle cx="${x.toFixed(1)}" cy="${y.toFixed(1)}" r="20.500" fill="${tone(x, y)}" fill-opacity=".82"/>`;
s += '<circle cx="396" cy="673" r="20.500" fill="#f0cfcf"/><circle cx="411" cy="627" r="20.500" fill="#dce8ee"/><circle cx="350" cy="642" r="20.500" fill="#bfcfdc"/><circle cx="483" cy="576" r="20.500" fill="#6691b9"/>';
[['2K', 289], ['1K', 466], ['0K', 643], ['-1K', 820], ['-2K', 997]].forEach(([t, y]) => s += `<text x="237" y="${y + 16}" text-anchor="end">${t}</text>`);
['0K', '1K', '2K', '3K', '4K', '5K', '6K', '7K', '8K'].forEach((t, i) => s += `<text x="${i < 8 ? 331 + i * 134 : 1392}" y="1119" text-anchor="middle">${t}</text>`);
s += '<text class="axis" x="841" y="1203" text-anchor="middle">Sales</text><text class="axis" transform="translate(82 595) rotate(-90)" text-anchor="middle">Profit</text>';
document.getElementById('scatter').innerHTML = s;
```
